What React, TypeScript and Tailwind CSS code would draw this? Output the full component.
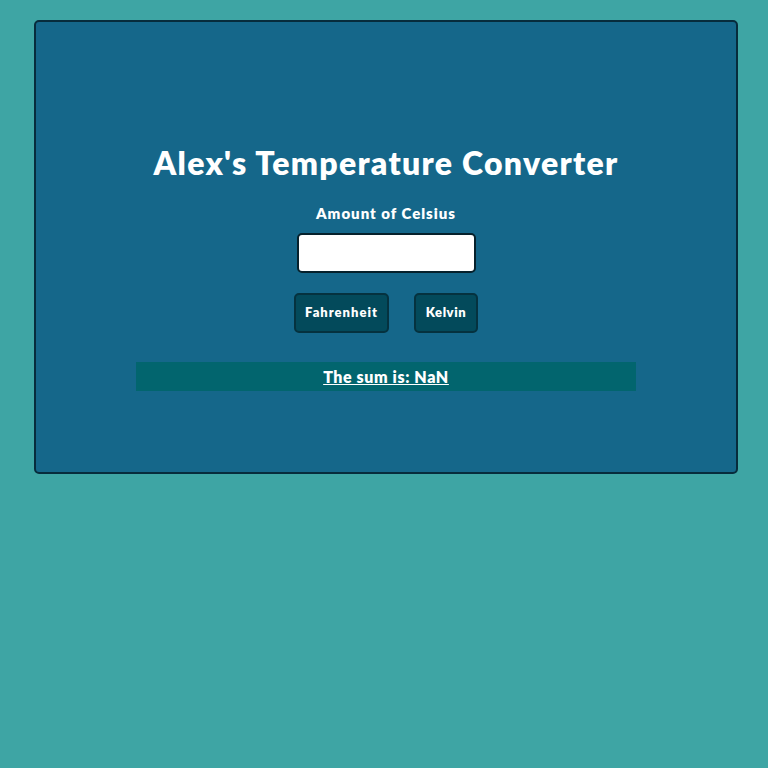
export default function App() {
  return (
    <div className="min-h-[768px] bg-[#3ea5a4] pt-[20px] font-['Lato',sans-serif]">
      <div className="ml-[34px] flex h-[454px] w-[704px] flex-col items-center rounded-[5px] border-2 border-[#072c3c] bg-[#15678a] pt-[122px]">
        <h1 className="text-[32px] leading-[38px] font-extrabold tracking-[1.3px] text-white">Alex's Temperature Converter</h1>
        <label className="mt-[22px] text-[15px] leading-[18px] font-extrabold tracking-[1px] text-white">Amount of Celsius</label>
        <input
          type="text"
          className="mt-[11px] h-[40px] w-[179px] rounded-[5px] border-2 border-[#06212c] bg-white px-2 outline-none"
        />
        <div className="mt-[20px] flex gap-[25px]">
          <button className="h-[40px] w-[95px] rounded-[5px] border-2 border-[#05323f] bg-[#034a5b] text-[13px] font-extrabold tracking-[1px] text-white">
            Fahrenheit
          </button>
          <button className="h-[40px] w-[64px] rounded-[5px] border-2 border-[#05323f] bg-[#034a5b] text-[13px] font-extrabold tracking-[0.6px] text-white">
            Kelvin
          </button>
        </div>
        <div className="mt-[29px] flex h-[29px] w-[500px] items-center justify-center bg-[#02656e]">
          <span className="text-[16px] font-extrabold tracking-[0.6px] text-white underline">The sum is: NaN</span>
        </div>
      </div>
    </div>
  );
}
